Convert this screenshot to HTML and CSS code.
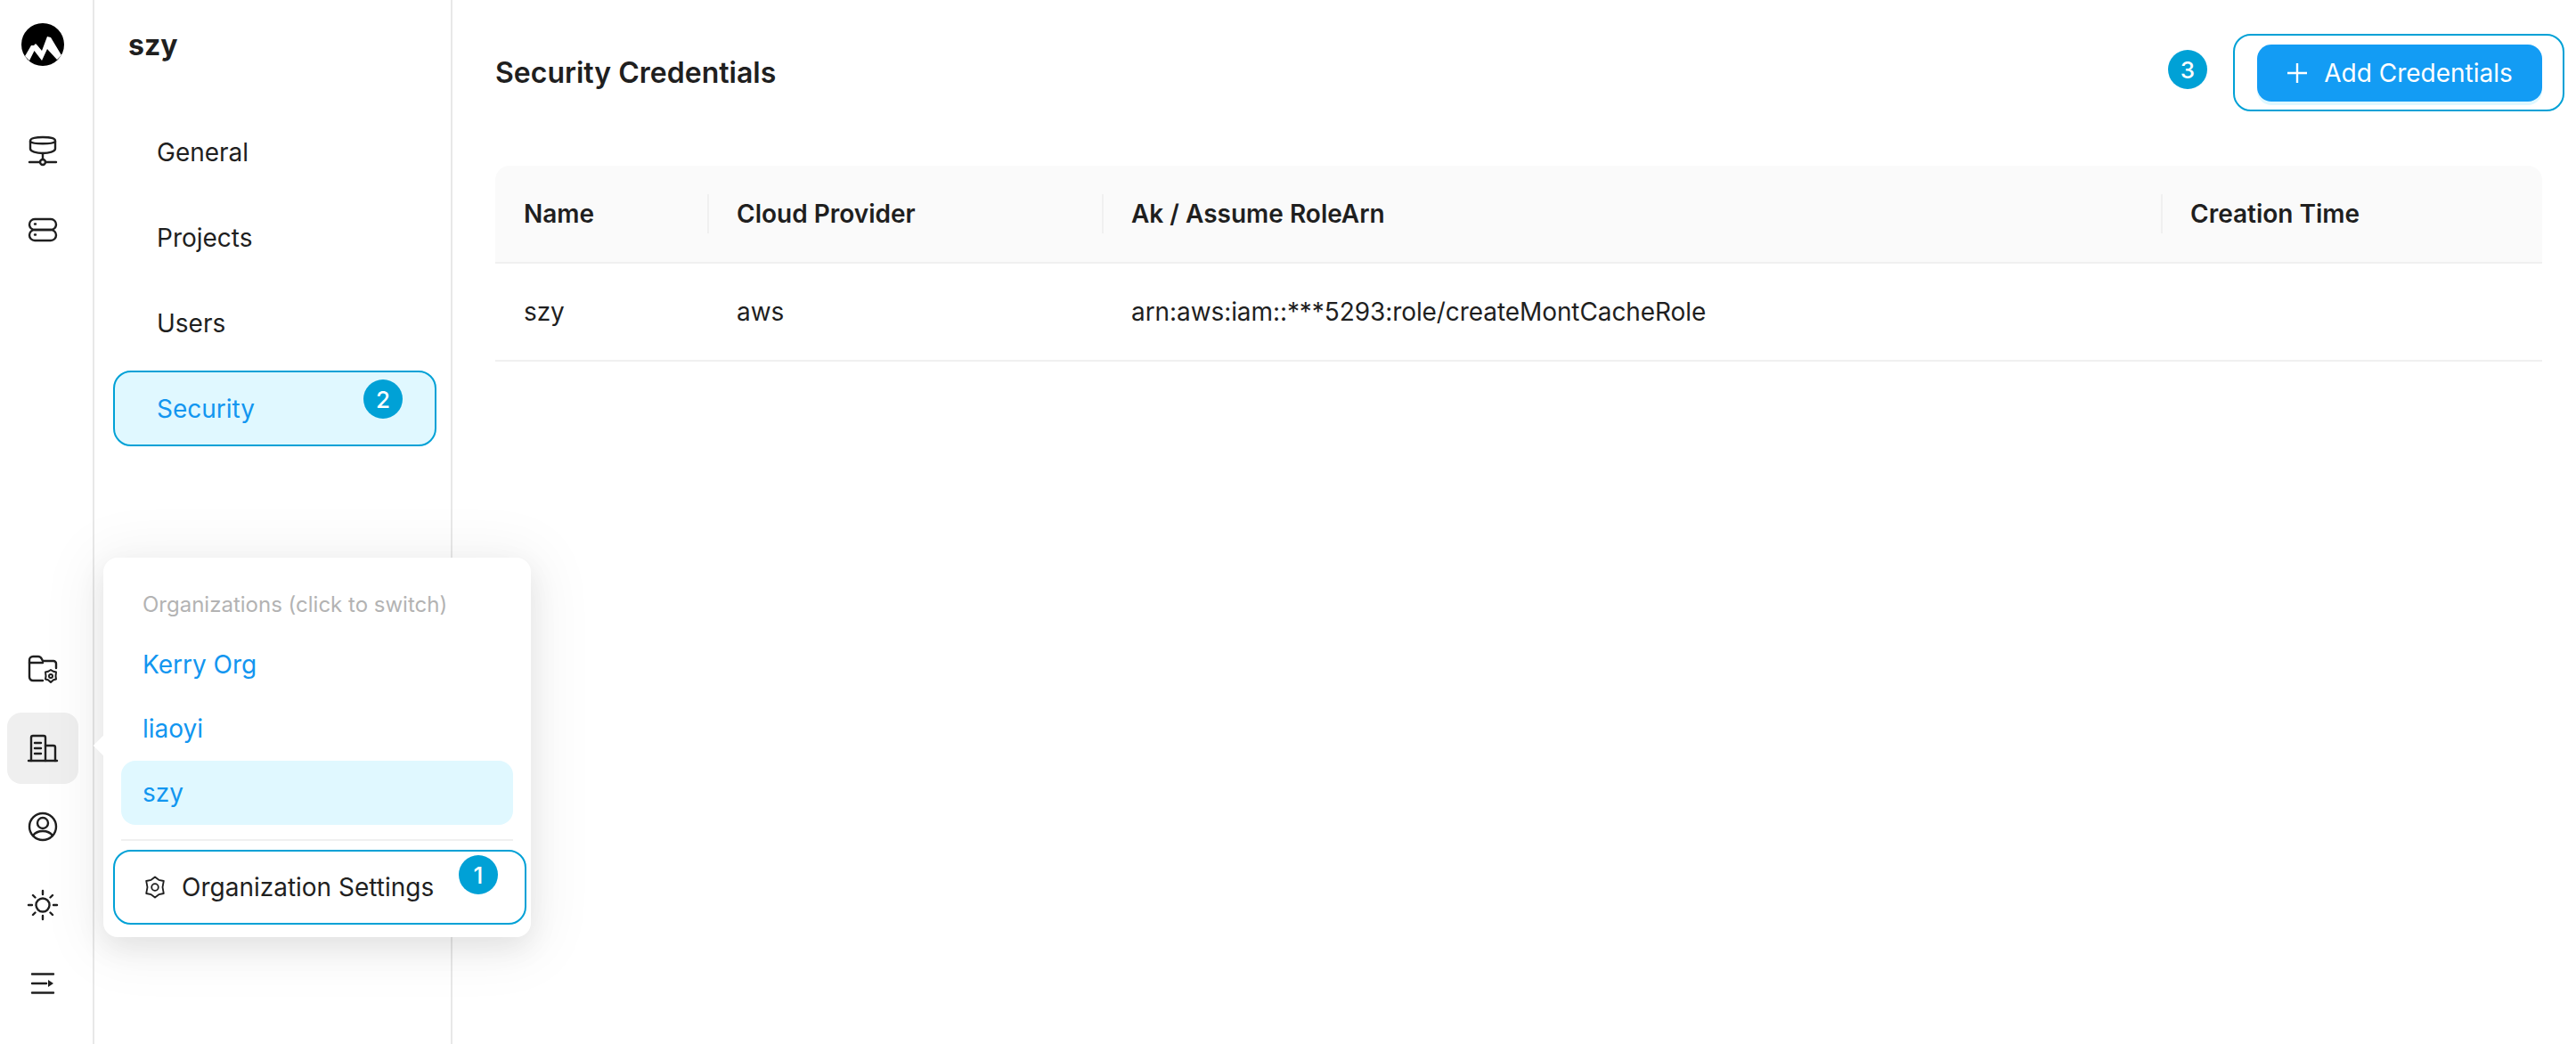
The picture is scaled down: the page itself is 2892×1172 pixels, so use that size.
FILE: index.html
```html
<!DOCTYPE html>
<html lang="en">
<head>
    <meta charset="UTF-8">
    <meta name="viewport" content="width=device-width, initial-scale=1.0">
    <title>Security Credentials</title>
    <link rel="stylesheet" href="styles.css">
</head>
<body>
    <div class="app">
        <aside class="rail">
            <div class="rail-top">
                <div class="logo">
                    <svg width="48" height="48" viewBox="0 0 48 48">
                        <circle cx="24" cy="24" r="24" fill="#000"/>
                        <path d="M4 37 L11 25 L14 25 L16 23 L18 25 L23 31 L29 15 L33 16 L45 36 L40 41 L29 29 L23 42 L14.500 31 L9 42 Z" fill="#fff"/>
                    </svg>
                </div>
                <div class="rail-item">
                    <svg width="32" height="34" viewBox="0 0 32 34">
                        <path d="M2 5c0-3 7-4 14-4s14 1 14 4v9c0 3-7 5-14 5S2 17 2 14z"/>
                        <path d="M2 6c3 3 25 3 28 0"/>
                        <path d="M16 19v7M1 29h12M19 29h12"/>
                        <circle cx="16" cy="29" r="3"/>
                    </svg>
                </div>
                <div class="rail-item">
                    <svg width="32" height="26" viewBox="0 0 32 26">
                        <rect x="1" y="1" width="30" height="12" rx="6"/>
                        <rect x="1" y="13" width="30" height="12" rx="6"/>
                        <path d="M7 6.500h1M7 18.500h1"/>
                    </svg>
                </div>
            </div>
            <div class="rail-bottom">
                <div class="rail-item">
                    <svg width="32" height="32" viewBox="0 0 32 32">
                        <path d="M16 28H5a4 4 0 0 1-4-4V5a4 4 0 0 1 4-4h6c2 0 3 1 4 3l1 2h12a3 3 0 0 1 3 3v5"/>
                        <path d="M1 8h15"/>
                        <path class="thin" d="M25 16L28 17.800 31 18.500 30.500 23 31 26.500 28 27.200 25 30 22 27.200 19 26.500 19.500 23 19 18.500 22 17.800z"/>
                        <circle class="thin" cx="25" cy="23" r="2"/>
                    </svg>
                </div>
                <div class="rail-item active">
                    <svg width="32" height="30" viewBox="0 0 32 30">
                        <path d="M0 29h32"/>
                        <path d="M3 29V3a2 2 0 0 1 2-2h12a2 2 0 0 1 2 2v26"/>
                        <path d="M19 12h9a2 2 0 0 1 2 2v15"/>
                        <path d="M7 9h7M7 15h7M7 21h7"/>
                    </svg>
                </div>
                <div class="rail-item">
                    <svg width="32" height="32" viewBox="0 0 32 32">
                        <circle cx="16" cy="16" r="15"/>
                        <circle cx="16" cy="12" r="6"/>
                        <path d="M5 26c3-4 7-5 11-5s8 1 11 5"/>
                    </svg>
                </div>
                <div class="rail-item">
                    <svg width="32" height="32" viewBox="0 0 32 32">
                        <circle cx="16" cy="16" r="7.500"/>
                        <path d="M16 0v4M16 28v4M0 16h4M28 16h4M5 5l2.500 2.500M24.500 24.500L27 27M5 27l2.500-2.500M24.500 7.500L27 5"/>
                    </svg>
                </div>
                <div class="rail-item">
                    <svg width="24" height="24" viewBox="0 0 24 24">
                        <path d="M0 1.500h24M0 12h16M0 22.500h24"/>
                        <path class="solid" d="M18 8l6 4-6 4z"/>
                    </svg>
                </div>
            </div>
        </aside>

        <nav class="subnav">
            <div class="org-name">szy</div>
            <ul class="subnav-list">
                <li class="subnav-item">General</li>
                <li class="subnav-item">Projects</li>
                <li class="subnav-item">Users</li>
                <li class="subnav-item current">Security<span class="badge badge-two">2</span></li>
            </ul>
        </nav>

        <main class="content">
            <div class="content-head">
                <h1 class="title">Security Credentials</h1>
                <div class="add-wrap">
                    <span class="badge badge-three">3</span>
                    <button type="button" class="add-button">
                        <svg width="24" height="24" viewBox="0 0 24 24"><path d="M12 1v22M1 12h22"/></svg>
                        Add Credentials
                    </button>
                </div>
            </div>
            <table class="cred-table">
                <colgroup>
                    <col class="col-name">
                    <col class="col-cloud">
                    <col class="col-arn">
                    <col class="col-time">
                </colgroup>
                <tr>
                    <th>Name</th>
                    <th>Cloud Provider</th>
                    <th>Ak / Assume RoleArn</th>
                    <th>Creation Time</th>
                </tr>
                <tr>
                    <td>szy</td>
                    <td>aws</td>
                    <td>arn:aws:iam::***5293:role/createMontCacheRole</td>
                    <td></td>
                </tr>
            </table>
        </main>
    </div>

    <!-- organization switcher popup -->
    <div class="popup">
        <span class="popup-arrow"></span>
        <div class="popup-label">Organizations (click to switch)</div>
        <div class="popup-item">Kerry Org</div>
        <div class="popup-item">liaoyi</div>
        <div class="popup-item selected">szy</div>
        <div class="popup-line"></div>
        <div class="popup-settings">
            <svg width="24" height="26" viewBox="0 0 24 26">
                <path d="M12 1.500L16.300 4.800 21.800 6 20.500 13 21.800 20 16.300 21.200 12 24.500 7.700 21.200 2.200 20 3.500 13 2.200 6 7.700 4.800z"/>
                <circle cx="12" cy="13" r="3.800"/>
            </svg>
            Organization Settings
            <span class="badge badge-one">1</span>
        </div>
    </div>
</body>
</html>
```
FILE: styles.css
```css
* {
    margin: 0;
    padding: 0;
    box-sizing: border-box;
}
body {
    font-family: Inter, "Liberation Sans", sans-serif;
    font-size: 28px;
    color: #1f1f1f;
    background-color: #fff;
    height: 100vh;
    overflow: hidden;
    position: relative;
}
.app {
    display: flex;
    height: 100%;
}

/* left icon rail */
.rail {
    width: 106px;
    flex-shrink: 0;
    border-right: 2px solid #e8e8e8;
    display: flex;
    flex-direction: column;
    justify-content: space-between;
    padding: 26px 16px 28px 8px;
}
.rail-top, .rail-bottom {
    display: flex;
    flex-direction: column;
    gap: 8px;
}
.logo {
    height: 96px;
    padding-left: 16px;
}
.rail-item {
    width: 80px;
    height: 80px;
    border-radius: 16px;
    display: flex;
    align-items: center;
    justify-content: center;
}
.rail-item.active {
    background-color: #efefef;
}
.rail-item svg {
    fill: none;
    stroke: #1f1f1f;
    stroke-width: 2.4;
    stroke-linecap: round;
    stroke-linejoin: round;
    overflow: visible;
}
.rail-item svg .solid {
    fill: #1f1f1f;
    stroke: none;
}
.rail-item svg .thin {
    stroke-width: 2;
}

/* second column */
.subnav {
    width: 402px;
    flex-shrink: 0;
    border-right: 2px solid #e8e8e8;
    padding: 32px 16px 0 21px;
}
.org-name {
    font-size: 32px;
    font-weight: 700;
    line-height: 38px;
    margin-left: 17px;
    margin-bottom: 58px;
}
.subnav-list {
    list-style-type: none;
    display: flex;
    flex-direction: column;
    gap: 11px;
}
.subnav-item {
    height: 85px;
    padding-left: 47px;
    padding-top: 1px;
    border: 2px solid transparent;
    border-radius: 20px;
    display: flex;
    align-items: center;
    position: relative;
}
.subnav-item.current {
    color: #1296f0;
    background-color: #e0f8ff;
    border-color: #00a1d6;
}

/* numbered markers */
.badge {
    position: absolute;
    width: 44px;
    height: 44px;
    border-radius: 50%;
    background-color: #00a1d6;
    color: #fff;
    font-size: 26px;
    font-weight: 500;
    display: flex;
    align-items: center;
    justify-content: center;
}
.badge-one {
    right: 30px;
    top: 4px;
}
.badge-two {
    right: 36px;
    top: 8px;
}
.badge-three {
    left: -75px;
    top: 16px;
}

/* main area */
.content {
    flex: 1;
    padding: 38px 13px 0 48px;
}
.content-head {
    display: flex;
    justify-content: space-between;
    align-items: center;
    margin-bottom: 61px;
    margin-right: 25px;
}
.title {
    font-size: 32px;
    font-weight: 600;
}
.add-wrap {
    position: relative;
    border: 2px solid #00a1d6;
    border-radius: 20px;
    padding: 10px 23px 9px 25px;
    margin-right: -25px;
}
.add-button {
    width: 320px;
    height: 64px;
    background-color: #139cf4;
    color: #fff;
    border: none;
    border-radius: 16px;
    font-family: inherit;
    font-size: 28px;
    display: flex;
    align-items: center;
    justify-content: center;
    gap: 18px;
    box-shadow: 0 4px 0 #e0f8ff;
}
.add-button svg {
    fill: none;
    stroke: #fff;
    stroke-width: 2.400;
}
.cred-table {
    width: 2298px;
    table-layout: fixed;
    border-collapse: separate;
    border-spacing: 0;
}
.col-name { width: 239px; }
.col-cloud { width: 443px; }
.col-arn { width: 1189px; }
.col-time { width: 427px; }
.cred-table th, .cred-table td {
    text-align: left;
    padding: 0 32px;
    border-bottom: 2px solid #f0f0f0;
}
.cred-table th {
    height: 110px;
    background-color: #fafafa;
    font-weight: 600;
    position: relative;
}
.cred-table td {
    height: 110px;
    letter-spacing: -0.08px;
}
.cred-table th:first-child {
    border-top-left-radius: 16px;
}
.cred-table th:last-child {
    border-top-right-radius: 16px;
}
.cred-table th:not(:first-child)::before {
    content: "";
    position: absolute;
    left: -1px;
    top: 32px;
    width: 2px;
    height: 44px;
    background-color: #f0f0f0;
}

/* popup over the sidebars */
.popup {
    position: absolute;
    left: 116px;
    top: 626px;
    width: 480px;
    height: 426px;
    padding: 20px;
    background-color: #fff;
    border-radius: 16px;
    box-shadow: 0 12px 32px 0 rgba(0, 0, 0, 0.08), 0 6px 64px 16px rgba(0, 0, 0, 0.05);
}
.popup-arrow {
    position: absolute;
    left: -8px;
    top: 203px;
    width: 16px;
    height: 16px;
    background-color: #fff;
    transform: rotate(45deg);
}
.popup-label {
    position: relative;
    font-size: 24px;
    color: #b3b3b3;
    height: 64px;
    padding: 0 24px;
    display: flex;
    align-items: center;
}
.popup-item {
    position: relative;
    height: 72px;
    padding: 0 24px;
    display: flex;
    align-items: center;
    color: #1296f0;
    border-radius: 16px;
}
.popup-item.selected {
    background-color: #e0f8ff;
}
.popup-line {
    height: 2px;
    background-color: #f0f0f0;
    margin: 16px 0;
}
.popup-settings {
    position: relative;
    height: 84px;
    margin: -6px -15px -6px -9px;
    padding-left: 33px;
    border: 2px solid #00a1d6;
    border-radius: 20px;
    display: flex;
    align-items: center;
    gap: 18px;
}
.popup-settings svg {
    fill: none;
    stroke: #1f1f1f;
    stroke-width: 1.800;
    stroke-linejoin: round;
}
```
